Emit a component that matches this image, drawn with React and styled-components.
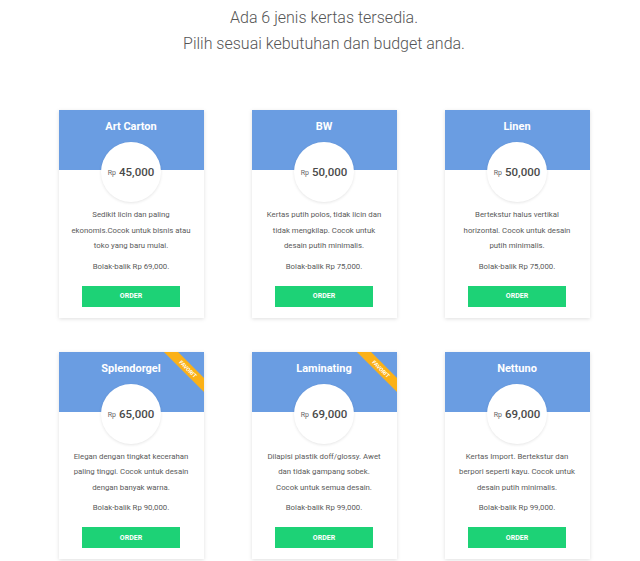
import React from "react";
import styled, { createGlobalStyle } from "styled-components";

const GlobalStyle = createGlobalStyle`
  body {
    margin: 0;
    background: #fff;
    font-family: Roboto, "Liberation Sans", sans-serif;
  }
`;

const Page = styled.div`
  padding: 5px 0 3px 8px;
`;

const Intro = styled.div`
  text-align: center;
  font-size: 16px;
  font-weight: 300;
  line-height: 26px;
  color: #555;
`;

const Grid = styled.div`
  display: grid;
  grid-template-columns: repeat(3, 145px);
  column-gap: 48px;
  row-gap: 34px;
  justify-content: center;
  margin-top: 53px;
`;

const Card = styled.div`
  background: #fff;
  box-shadow: 0 1px 4px rgba(0, 0, 0, 0.13);
  padding-bottom: 11px;
  text-align: center;
`;

const Header = styled.div`
  position: relative;
  overflow: hidden;
  height: 60px;
  background: #6a9de2;
  box-sizing: border-box;
  padding-top: 10px;
`;

const Title = styled.div`
  color: #fff;
  font-size: 11px;
  font-weight: 700;
  line-height: 14px;
`;

const Ribbon = styled.div`
  position: absolute;
  top: 12px;
  right: -16px;
  width: 64px;
  height: 10px;
  line-height: 10px;
  background: #fbb117;
  color: #fff;
  font-size: 5.5px;
  font-weight: 700;
  transform: rotate(45deg);
`;

const Circle = styled.div`
  position: relative;
  width: 60px;
  height: 60px;
  margin: -28px auto 0;
  border-radius: 50%;
  background: #fff;
  box-shadow: 0 1px 3px rgba(0, 0, 0, 0.1);
  display: flex;
  align-items: center;
  justify-content: center;
  gap: 3px;
  color: #4a4a4a;
`;

const Currency = styled.span`
  font-size: 7px;
  color: #666;
  margin-top: 2px;
`;

const Amount = styled.span`
  font-size: 11.5px;
  font-weight: 500;
`;

const Desc = styled.div`
  margin-top: 5px;
  font-size: 7.8px;
  line-height: 15.5px;
  color: #5a5a5a;
  white-space: nowrap;
`;

const Extra = styled.div`
  margin-top: 5px;
  font-size: 7.8px;
  line-height: 15px;
  color: #5a5a5a;
`;

const OrderButton = styled.button`
  display: block;
  margin: 12px auto 0;
  width: 98px;
  height: 21px;
  border: none;
  padding: 0;
  background: #1dd276;
  color: #fff;
  font-family: Roboto, "Liberation Sans", sans-serif;
  font-size: 7px;
  font-weight: 700;
`;

const papers = [
  {
    name: "Art Carton",
    price: "45,000",
    lines: ["Sedikit licin dan paling", "ekonomis.Cocok untuk bisnis atau", "toko yang baru mulai."],
    duplex: "69,000",
  },
  {
    name: "BW",
    price: "50,000",
    lines: ["Kertas putih polos, tidak licin dan", "tidak mengkilap. Cocok untuk", "desain putih minimalis."],
    duplex: "75,000",
  },
  {
    name: "Linen",
    price: "50,000",
    lines: ["Bertekstur halus vertikal", "horizontal. Cocok untuk desain", "putih minimalis."],
    duplex: "75,000",
  },
  {
    name: "Splendorgel",
    price: "65,000",
    favorite: true,
    lines: ["Elegan dengan tingkat kecerahan", "paling tinggi. Cocok untuk desain", "dengan banyak warna."],
    duplex: "90,000",
  },
  {
    name: "Laminating",
    price: "69,000",
    favorite: true,
    lines: ["Dilapisi plastik doff/glossy. Awet", "dan tidak gampang sobek.", "Cocok untuk semua desain."],
    duplex: "99,000",
  },
  {
    name: "Nettuno",
    price: "69,000",
    lines: ["Kertas Import. Bertekstur dan", "berpori seperti kayu. Cocok untuk", "desain putih minimalis."],
    duplex: "99,000",
  },
];

function PaperCard({ paper }) {
  return (
    <Card>
      <Header>
        <Title>{paper.name}</Title>
        {paper.favorite && <Ribbon>FAVORIT</Ribbon>}
      </Header>
      <Circle>
        <Currency>Rp</Currency>
        <Amount>{paper.price}</Amount>
      </Circle>
      <Desc>
        {paper.lines.map((l) => (
          <div key={l}>{l}</div>
        ))}
      </Desc>
      <Extra>Bolak-balik Rp {paper.duplex}.</Extra>
      <OrderButton>ORDER</OrderButton>
    </Card>
  );
}

export default function App() {
  return (
    <Page>
      <GlobalStyle />
      <Intro>
        Ada 6 jenis kertas tersedia.
        <br />
        Pilih sesuai kebutuhan dan budget anda.
      </Intro>
      <Grid>
        {papers.map((p) => (
          <PaperCard key={p.name} paper={p} />
        ))}
      </Grid>
    </Page>
  );
}
